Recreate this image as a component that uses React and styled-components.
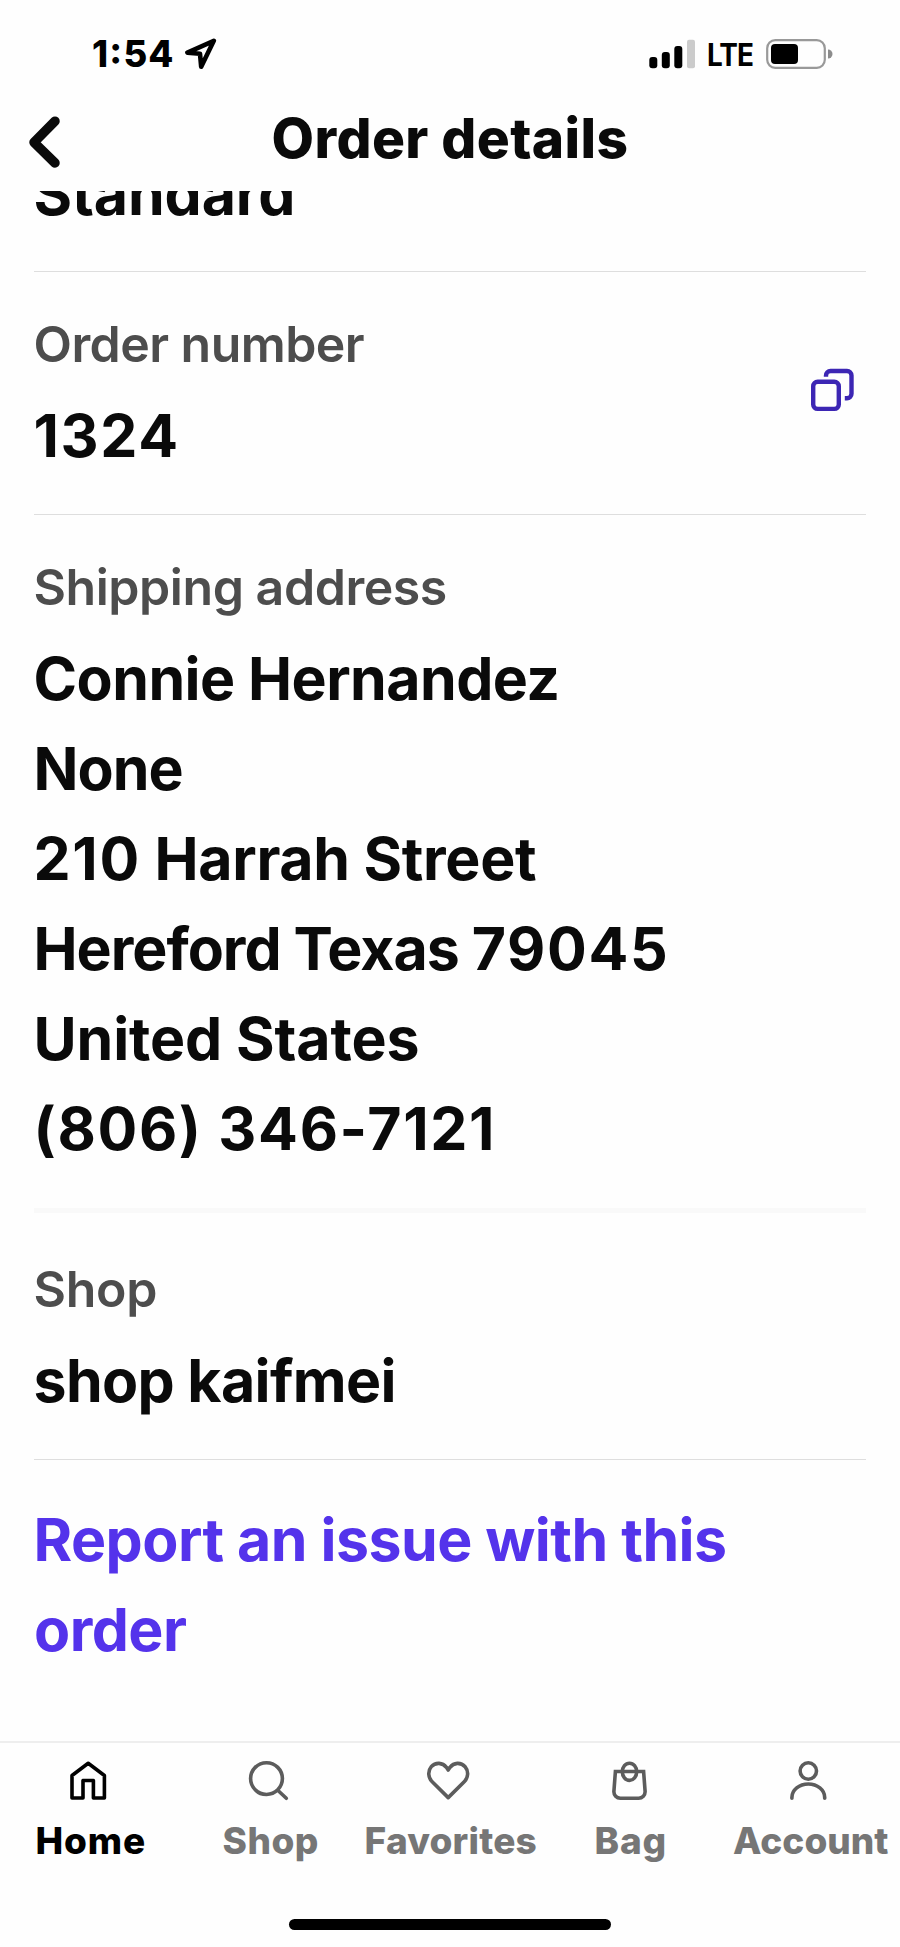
import React from "react";
import styled, { createGlobalStyle } from "styled-components";

const GlobalStyle = createGlobalStyle`
  * { box-sizing: border-box; }
  body {
    margin: 0;
    background: #fefefe;
    font-family: Inter, "Liberation Sans", sans-serif;
  }
`;

const Screen = styled.div`
  width: 900px;
  height: 1947px;
  display: flex;
  flex-direction: column;
  overflow: hidden;
  background: #fefefe;
  color: #0a0a0a;
`;

const StatusBar = styled.div`
  height: 100px;
  flex: none;
  display: flex;
  align-items: flex-start;
  justify-content: space-between;
  padding: 31px 67px 0 92px;
  color: #000;
`;

const StatusGroup = styled.div`
  display: flex;
  align-items: center;
  height: 46px;
`;

const Time = styled.span`
  width: 93px;
  font-size: 36.5px;
  line-height: 46px;
  font-weight: 800;
  font-feature-settings: "case" 1;
  letter-spacing: 1.2px;
  white-space: nowrap;
`;

const Network = styled.span`
  width: 46px;
  margin: 0 13px 0 11.5px;
  font-size: 31px;
  line-height: 46px;
  font-weight: 700;
  letter-spacing: -1px;
  padding-top: 2px;
  white-space: nowrap;
  transform: scaleX(0.9);
  transform-origin: left center;
`;

const TitleBar = styled.header`
  height: 91px;
  flex: none;
  display: grid;
  grid-template-columns: 90px 1fr 90px;
`;

const BackButton = styled.button`
  border: 0;
  background: none;
  padding: 14px 0 0 25px;
  display: flex;
  align-items: flex-start;
  color: #0a0a0a;
`;

const Title = styled.h1`
  margin: 0;
  padding-top: 6px;
  text-align: center;
  font-size: 55px;
  line-height: 64px;
  font-weight: 800;
  letter-spacing: 0.4px;
`;

const Content = styled.main`
  flex: 1;
  min-height: 0;
  overflow: hidden;
  padding: 0 34px;
`;

const Section = styled.section`
  display: flex;
  align-items: flex-start;
  justify-content: space-between;
  height: ${(p) => p.$height}px;
  padding-top: ${(p) => p.$top || 0}px;
  border-bottom: ${(p) => p.$rule || "1px solid #dedede"};
`;

const ScrolledSection = styled(Section)`
  margin-top: -42px;
`;

const Label = styled.h2`
  margin: 0 0 17px;
  font-size: 50px;
  line-height: 60px;
  font-weight: 600;
  letter-spacing: ${(p) => p.$track ?? -0.55}px;
  text-indent: -0.5px;
  color: #4d4d4d;
`;

const Value = styled.div`
  font-size: 59px;
  line-height: 90px;
  font-weight: 700;
  letter-spacing: ${(p) => p.$track ?? -1}px;
  text-indent: -0.5px;
  white-space: nowrap;
`;

const Digits = styled.span`
  letter-spacing: 1.65px;
`;

const CopyButton = styled.button`
  border: 0;
  background: none;
  padding: 54px 10px 0 0;
  color: #3c26b4;
`;

const ReportLink = styled.a`
  display: block;
  padding-top: 35px;
  font-size: 59px;
  line-height: 90px;
  font-weight: 700;
  letter-spacing: -0.53px;
  text-indent: -0.5px;
  color: #5433eb;
`;

const TabBar = styled.nav`
  height: 166px;
  flex: none;
  display: grid;
  grid-template-columns: repeat(5, 180px);
  border-top: 2px solid #eeeeee;
`;

const Tab = styled.a`
  display: flex;
  flex-direction: column;
  align-items: center;
  padding-top: 16px;
  color: ${(p) => (p.$active ? "#000" : "#5c5c5c")};
`;

const TabIcon = styled.svg`
  width: 44px;
  height: 44px;
  margin-right: 4px;
  overflow: visible;
`;

const TabLabel = styled.span`
  margin-top: 12.5px;
  padding-left: 1.5px;
  font-size: 37px;
  line-height: 50px;
  font-weight: 800;
  letter-spacing: ${(p) => p.$track}px;
  white-space: nowrap;
  color: ${(p) => (p.$active ? "#000" : "#767676")};
`;

const HomeArea = styled.div`
  height: 40px;
  flex: none;
  display: flex;
  justify-content: center;
  padding-top: 12px;
`;

const HomeIndicator = styled.div`
  width: 322px;
  height: 11px;
  border-radius: 6px;
  background: #000;
`;

const LocationIcon = () => (
  <svg width="32" height="34" viewBox="0 0 32 34" fill="none" stroke="currentColor" strokeWidth="4.6" strokeLinejoin="round">
    <path d="M28.8 3.8 2.4 15.6 15 16.8 16.2 29.8z" />
  </svg>
);

const SignalIcon = () => (
  <svg width="47" height="30" viewBox="0 0 47 30" fill="currentColor">
    <rect x="0.3" y="18" width="8" height="11.3" rx="3" />
    <rect x="12.8" y="13" width="8" height="16.3" rx="3" />
    <rect x="25.3" y="7" width="8" height="22.3" rx="3" />
    <rect x="38" y="0.7" width="8" height="28.6" rx="2" fill="#cbcbcb" />
  </svg>
);

const BatteryIcon = () => (
  <svg width="67" height="30" viewBox="0 0 67 30">
    <rect x="1.2" y="1.2" width="57.6" height="27.6" rx="8" fill="none" stroke="#999" strokeWidth="2.2" />
    <rect x="5" y="5" width="27" height="20" rx="4" fill="#000" />
    <path d="M62 10.5a4.5 4.5 0 0 1 0 9z" fill="#8c8c8c" />
  </svg>
);

const BackIcon = () => (
  <svg width="37" height="56" viewBox="0 0 37 56" fill="none" stroke="currentColor" strokeWidth="9.5" strokeLinecap="round" strokeLinejoin="round">
    <path d="M30 7.2 9 28.3 30 49" />
  </svg>
);

const CopyIcon = () => (
  <svg width="46" height="46" viewBox="0 0 46 46" fill="none" stroke="currentColor" strokeWidth="4.4">
    <rect x="3.2" y="13.7" width="25.6" height="27.2" rx="4.5" />
    <path d="M16 8.8V7.5A4.5 4.5 0 0 1 20.5 3h16.5a4.5 4.5 0 0 1 4.5 4.5v18.3a4.5 4.5 0 0 1-4.5 4.5H34.8" />
  </svg>
);

const tabs = [
  {
    name: "Home",
    active: true,
    track: 0.8,
    icon: <path d="M6 16.5 22.2 4.3 38.4 16.5V39H27.4V21.5H17V39H6z" />,
  },
  {
    name: "Shop",
    track: 0.5,
    icon: (
      <>
        <circle cx="20.5" cy="19.6" r="15.9" />
        <path d="m32 31.5 8.3 7.8" />
      </>
    ),
  },
  {
    name: "Favorites",
    track: 0.2,
    icon: (
      <path d="M22.2 38.6 6.2 22.8C2 18.5 1.6 12 5.3 7.7c4.2-4.7 11.4-4.3 15.1.6L22.2 11l1.8-2.7c3.7-4.9 10.9-5.3 15.1-.6 3.7 4.3 3.3 10.8-.9 15.1z" />
    ),
  },
  {
    name: "Bag",
    track: 0.8,
    icon: (
      <>
        <ellipse cx="23.5" cy="12.8" rx="7.2" ry="8.6" />
        <path strokeLinejoin="miter" d="M9.4 12.5h28.2l1.5 19.8a6.5 6.5 0 0 1-6.5 6.9H14.4a6.5 6.5 0 0 1-6.5-6.9z" />
      </>
    ),
  },
  {
    name: "Account",
    track: 0,
    icon: (
      <>
        <circle cx="22.3" cy="12" r="8.2" />
        <path d="M5.9 39.3V38.5a16.4 13.5 0 0 1 32.8 0v0.8" />
      </>
    ),
  },
];

const address = [
  { text: "Connie Hernandez", track: -0.55 },
  { text: "None", track: -1 },
  { digits: "210", text: " Harrah Street", track: -0.3 },
  { text: "Hereford Texas ", digitsAfter: "79045", track: -1 },
  { text: "United States", track: -0.1 },
  { digits: "(806) 346-7121", text: "" },
];

export default function App() {
  return (
    <Screen>
      <GlobalStyle />
      <StatusBar>
        <StatusGroup>
          <Time>1:54</Time>
          <LocationIcon />
        </StatusGroup>
        <StatusGroup>
          <SignalIcon />
          <Network>LTE</Network>
          <BatteryIcon />
        </StatusGroup>
      </StatusBar>
      <TitleBar>
        <BackButton aria-label="Back">
          <BackIcon />
        </BackButton>
        <Title>Order details</Title>
      </TitleBar>
      <Content>
        <ScrolledSection $height={123}>
          <Value $track={-0.1}>Standard</Value>
        </ScrolledSection>
        <Section $height={243} $top={42}>
          <div>
            <Label>Order number</Label>
            <Value>
              <Digits>1324</Digits>
            </Value>
          </div>
          <CopyButton aria-label="Copy order number">
            <CopyIcon />
          </CopyButton>
        </Section>
        <Section $height={698} $top={42} $rule="5px solid #f9f9f9">
          <div>
            <Label $track={-0.45}>Shipping address</Label>
            {address.map((line) => (
              <Value key={line.text} $track={line.track}>
                {line.digits && <Digits>{line.digits}</Digits>}
                {line.text}
                {line.digitsAfter && <Digits>{line.digitsAfter}</Digits>}
              </Value>
            ))}
          </div>
        </Section>
        <Section $height={247} $top={46}>
          <div>
            <Label $track={-0.3}>Shop</Label>
            <Value $track={-0.65}>shop kaifmei</Value>
          </div>
        </Section>
        <ReportLink>Report an issue with this order</ReportLink>
      </Content>
      <TabBar>
        {tabs.map((tab) => (
          <Tab key={tab.name} $active={tab.active}>
            <TabIcon
              viewBox="0 0 44 44"
              fill="none"
              stroke="currentColor"
              strokeWidth="3.6"
              strokeLinecap="round"
              strokeLinejoin="round"
            >
              {tab.icon}
            </TabIcon>
            <TabLabel $active={tab.active} $track={tab.track}>
              {tab.name}
            </TabLabel>
          </Tab>
        ))}
      </TabBar>
      <HomeArea>
        <HomeIndicator />
      </HomeArea>
    </Screen>
  );
}
